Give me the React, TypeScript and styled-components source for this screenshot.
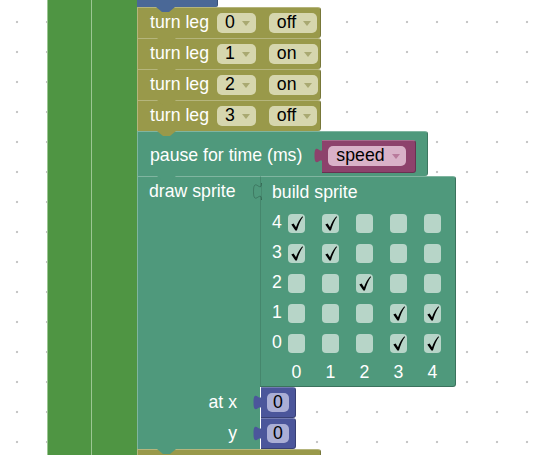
import React from 'react';
import styled, { createGlobalStyle } from 'styled-components';

const GREEN = '#4f9543';
const OLIVE = '#99994a';
const TEAL = '#4f997c';
const PURPLE = '#8d426c';
const INDIGO = '#4b569b';
const BLUE = '#4a6897';

const GlobalStyle = createGlobalStyle`
  html, body {
    margin: 0;
    padding: 0;
    overflow: hidden;
    background: #fff;
  }
`;

const Workspace = styled.div`
  width: 533px;
  height: 455px;
  box-sizing: border-box;
  overflow: hidden;
  display: flex;
  padding-left: 47px;
  background-color: #fff;
  background-image: radial-gradient(circle, #c6c6c6 1.1px, transparent 1.6px);
  background-size: 30px 30px;
  background-position: 2px 7px;
  font-family: 'Liberation Sans', Arial, sans-serif;
  font-size: 17.7px;
`;

const GreenColumn = styled.div<{ $width: number }>`
  box-sizing: border-box;
  width: ${(p) => p.$width}px;
  flex-shrink: 0;
  background: ${GREEN};
  border-left: 1px solid #9cc693;
`;

const Stack = styled.div`
  display: flex;
  flex-direction: column;
  align-items: flex-start;
`;

type BlockProps = { $bg: string; $width: number; $height: number; $padTop?: number };

const StatementBlock = styled.div<BlockProps>`
  position: relative;
  box-sizing: border-box;
  width: ${(p) => p.$width}px;
  height: ${(p) => p.$height}px;
  flex-shrink: 0;
  display: flex;
  align-items: center;
  padding: ${(p) => p.$padTop ?? 0}px 0 0 12px;
  background: ${(p) => p.$bg};
  border-top: 1px solid rgba(255, 255, 255, 0.28);
  border-left: 1px solid rgba(255, 255, 255, 0.28);
  border-right: 1px solid rgba(0, 0, 0, 0.22);
  border-top-right-radius: 3px;
  border-bottom-right-radius: 3px;
  color: #fff;
`;

const TopStub = styled.div`
  position: relative;
  box-sizing: border-box;
  width: 81px;
  height: 7px;
  flex-shrink: 0;
  background: ${BLUE};
  border-right: 1px solid rgba(0, 0, 0, 0.22);
  border-bottom-right-radius: 2px;
`;

const Label = styled.span<{ $mr?: number }>`
  white-space: nowrap;
  margin-right: ${(p) => p.$mr ?? 0}px;
  line-height: 1;
`;

const NotchSvg = styled.svg`
  position: absolute;
  left: 19px;
  top: 100%;
  z-index: 2;
`;

const Notch = ({ color }: { color: string }) => (
  <NotchSvg width="19" height="5" viewBox="0 0 19 5">
    <path d="M0 0 L6 5 L13 5 L19 0 Z" fill={color} />
  </NotchSvg>
);

const Dropdown = styled.span<{ $bg: string; $mr?: number }>`
  display: inline-flex;
  align-items: center;
  gap: 7px;
  height: 20px;
  padding: 0 6px 0 8px;
  margin-right: ${(p) => p.$mr ?? 0}px;
  border-radius: 5px;
  background: ${(p) => p.$bg};
  color: #000;
  line-height: 1;
`;

const Arrow = ({ color }: { color: string }) => (
  <svg width="8" height="5" viewBox="0 0 8 5">
    <path d="M0 0 L8 0 L4 5 Z" fill={color} />
  </svg>
);

const KnobSvg = styled.svg`
  position: absolute;
  left: -8px;
  top: 6px;
`;

const Knob = ({ color, stroke }: { color: string; stroke?: string }) => (
  <KnobSvg width="9" height="17" viewBox="0 0 9 17">
    <path
      d="M9 0 L8.5 0 C8.5 11 0.5 -7 0.5 8.5 S8.5 6 8.5 17 L9 17 Z"
      fill={color}
      stroke={stroke ?? 'none'}
      strokeWidth="1"
    />
  </KnobSvg>
);

const ValueBlock = styled.div<{ $bg: string; $width: number; $height: number; $ml?: number }>`
  position: relative;
  box-sizing: border-box;
  width: ${(p) => p.$width}px;
  height: ${(p) => p.$height}px;
  margin-left: ${(p) => p.$ml ?? 0}px;
  flex-shrink: 0;
  display: flex;
  align-items: center;
  padding-left: 6px;
  background: ${(p) => p.$bg};
  border-top: 1px solid rgba(255, 255, 255, 0.22);
  border-right: 1px solid rgba(0, 0, 0, 0.25);
  border-bottom: 1px solid rgba(0, 0, 0, 0.25);
  border-radius: 0 3px 3px 0;
`;

const NumberField = styled.span`
  display: inline-flex;
  align-items: center;
  justify-content: center;
  width: 22px;
  height: 19px;
  border-radius: 5px;
  background: #aaaed5;
  color: #000;
  line-height: 1;
`;

/* draw sprite */

const DrawBlock = styled.div`
  display: flex;
  flex-shrink: 0;
`;

const DrawLeft = styled.div`
  position: relative;
  box-sizing: border-box;
  width: 123px;
  height: 273px;
  display: flex;
  flex-direction: column;
  background: ${TEAL};
  border-top: 1px solid rgba(255, 255, 255, 0.28);
  border-left: 1px solid rgba(255, 255, 255, 0.28);
  color: #fff;
`;

const DrawHead = styled.div`
  flex: 1 0 auto;
  display: flex;
  align-items: flex-start;
  padding: 6px 0 0 11px;
`;

const ArgRow = styled.div`
  height: 31px;
  display: flex;
  align-items: center;
  justify-content: flex-end;
  padding-right: 23px;
  flex-shrink: 0;
`;

const DrawRight = styled.div`
  display: flex;
  flex-direction: column;
  align-items: flex-start;
`;

const SpriteBlock = styled.div`
  position: relative;
  box-sizing: border-box;
  width: 196px;
  height: 211px;
  background: ${TEAL};
  border-top: 1px solid rgba(255, 255, 255, 0.28);
  border-left: 1px solid rgba(0, 0, 0, 0.12);
  border-right: 1px solid rgba(0, 0, 0, 0.25);
  border-bottom: 1px solid rgba(0, 0, 0, 0.25);
  border-radius: 0 3px 3px 0;
  color: #fff;
`;

const SpriteHead = styled.div`
  height: 31px;
  display: flex;
  align-items: center;
  padding-left: 11px;
`;

const Grid = styled.div`
  display: grid;
  grid-template-columns: 16px repeat(5, 34px);
  grid-auto-rows: 30px;
  padding-left: 11px;
`;

const RowLabel = styled.div`
  display: flex;
  align-items: center;
  line-height: 1;
`;

const Cell = styled.div`
  display: flex;
  align-items: center;
`;

const Check = styled.div`
  width: 17px;
  height: 19px;
  border-radius: 4px;
  background: #b7d5c8;
  display: flex;
  align-items: center;
  justify-content: center;
`;

const Tick = () => (
  <svg width="12" height="15" viewBox="0 0 12 15">
    <path
      d="M0.3 8.6 L2.6 7.4 L5 11.3 C6.6 6.8 8.9 3 11.4 0.3 L12 0.9 C9.6 4 7.6 8.6 5.9 14.6 L4.4 14.6 Z"
      fill="#000"
    />
  </svg>
);

const ColLabel = styled.div`
  width: 17px;
  height: 28px;
  display: flex;
  align-items: center;
  justify-content: center;
  line-height: 1;
`;

const legs = [
  { leg: '0', state: 'off' },
  { leg: '1', state: 'on' },
  { leg: '2', state: 'on' },
  { leg: '3', state: 'off' },
];

const sprite: Record<number, number[]> = {
  4: [0, 1],
  3: [0, 1],
  2: [2],
  1: [3, 4],
  0: [3, 4],
};

const OLIVE_FIELD = '#d6d6ae';
const OLIVE_ARROW = '#a9a972';

export default function App() {
  return (
    <>
      <GlobalStyle />
      <Workspace>
        <GreenColumn $width={44} />
        <GreenColumn $width={46} />
        <Stack>
          <TopStub>
            <Notch color={BLUE} />
          </TopStub>

          {legs.map((l) => (
            <StatementBlock key={l.leg} $bg={OLIVE} $width={184} $height={31}>
              <Label $mr={8}>turn leg</Label>
              <Dropdown $bg={OLIVE_FIELD} $mr={13}>
                {l.leg}
                <Arrow color={OLIVE_ARROW} />
              </Dropdown>
              <Dropdown $bg={OLIVE_FIELD}>
                {l.state}
                <Arrow color={OLIVE_ARROW} />
              </Dropdown>
              <Notch color={OLIVE} />
            </StatementBlock>
          ))}

          <StatementBlock $bg={TEAL} $width={291} $height={45} $padTop={4}>
            <Label>pause for time (ms)</Label>
            <ValueBlock $bg={PURPLE} $width={94} $height={33} $ml={20}>
              <Knob color={PURPLE} />
              <Dropdown $bg="#d9b1c8">
                speed
                <Arrow color="#b97a9c" />
              </Dropdown>
            </ValueBlock>
            <Notch color={TEAL} />
          </StatementBlock>

          <DrawBlock>
            <DrawLeft>
              <DrawHead>
                <Label>draw sprite</Label>
              </DrawHead>
              <ArgRow>
                <Label>at x</Label>
              </ArgRow>
              <ArgRow>
                <Label>y</Label>
              </ArgRow>
              <Notch color={TEAL} />
            </DrawLeft>
            <DrawRight>
              <SpriteBlock>
                <Knob color={TEAL} stroke="rgba(0,0,0,0.2)" />
                <SpriteHead>
                  <Label>build sprite</Label>
                </SpriteHead>
                <Grid>
                  {[4, 3, 2, 1, 0].map((row) => (
                    <React.Fragment key={row}>
                      <RowLabel>{row}</RowLabel>
                      {[0, 1, 2, 3, 4].map((col) => (
                        <Cell key={col}>
                          <Check>{sprite[row].includes(col) && <Tick />}</Check>
                        </Cell>
                      ))}
                    </React.Fragment>
                  ))}
                  <span />
                  {[0, 1, 2, 3, 4].map((col) => (
                    <Cell key={col}>
                      <ColLabel>{col}</ColLabel>
                    </Cell>
                  ))}
                </Grid>
              </SpriteBlock>
              <ValueBlock $bg={INDIGO} $width={35} $height={31} $ml={1}>
                <Knob color={INDIGO} />
                <NumberField>0</NumberField>
              </ValueBlock>
              <ValueBlock $bg={INDIGO} $width={35} $height={31} $ml={1}>
                <Knob color={INDIGO} />
                <NumberField>0</NumberField>
              </ValueBlock>
            </DrawRight>
          </DrawBlock>

          <StatementBlock $bg={OLIVE} $width={184} $height={20} />
        </Stack>
      </Workspace>
    </>
  );
}
